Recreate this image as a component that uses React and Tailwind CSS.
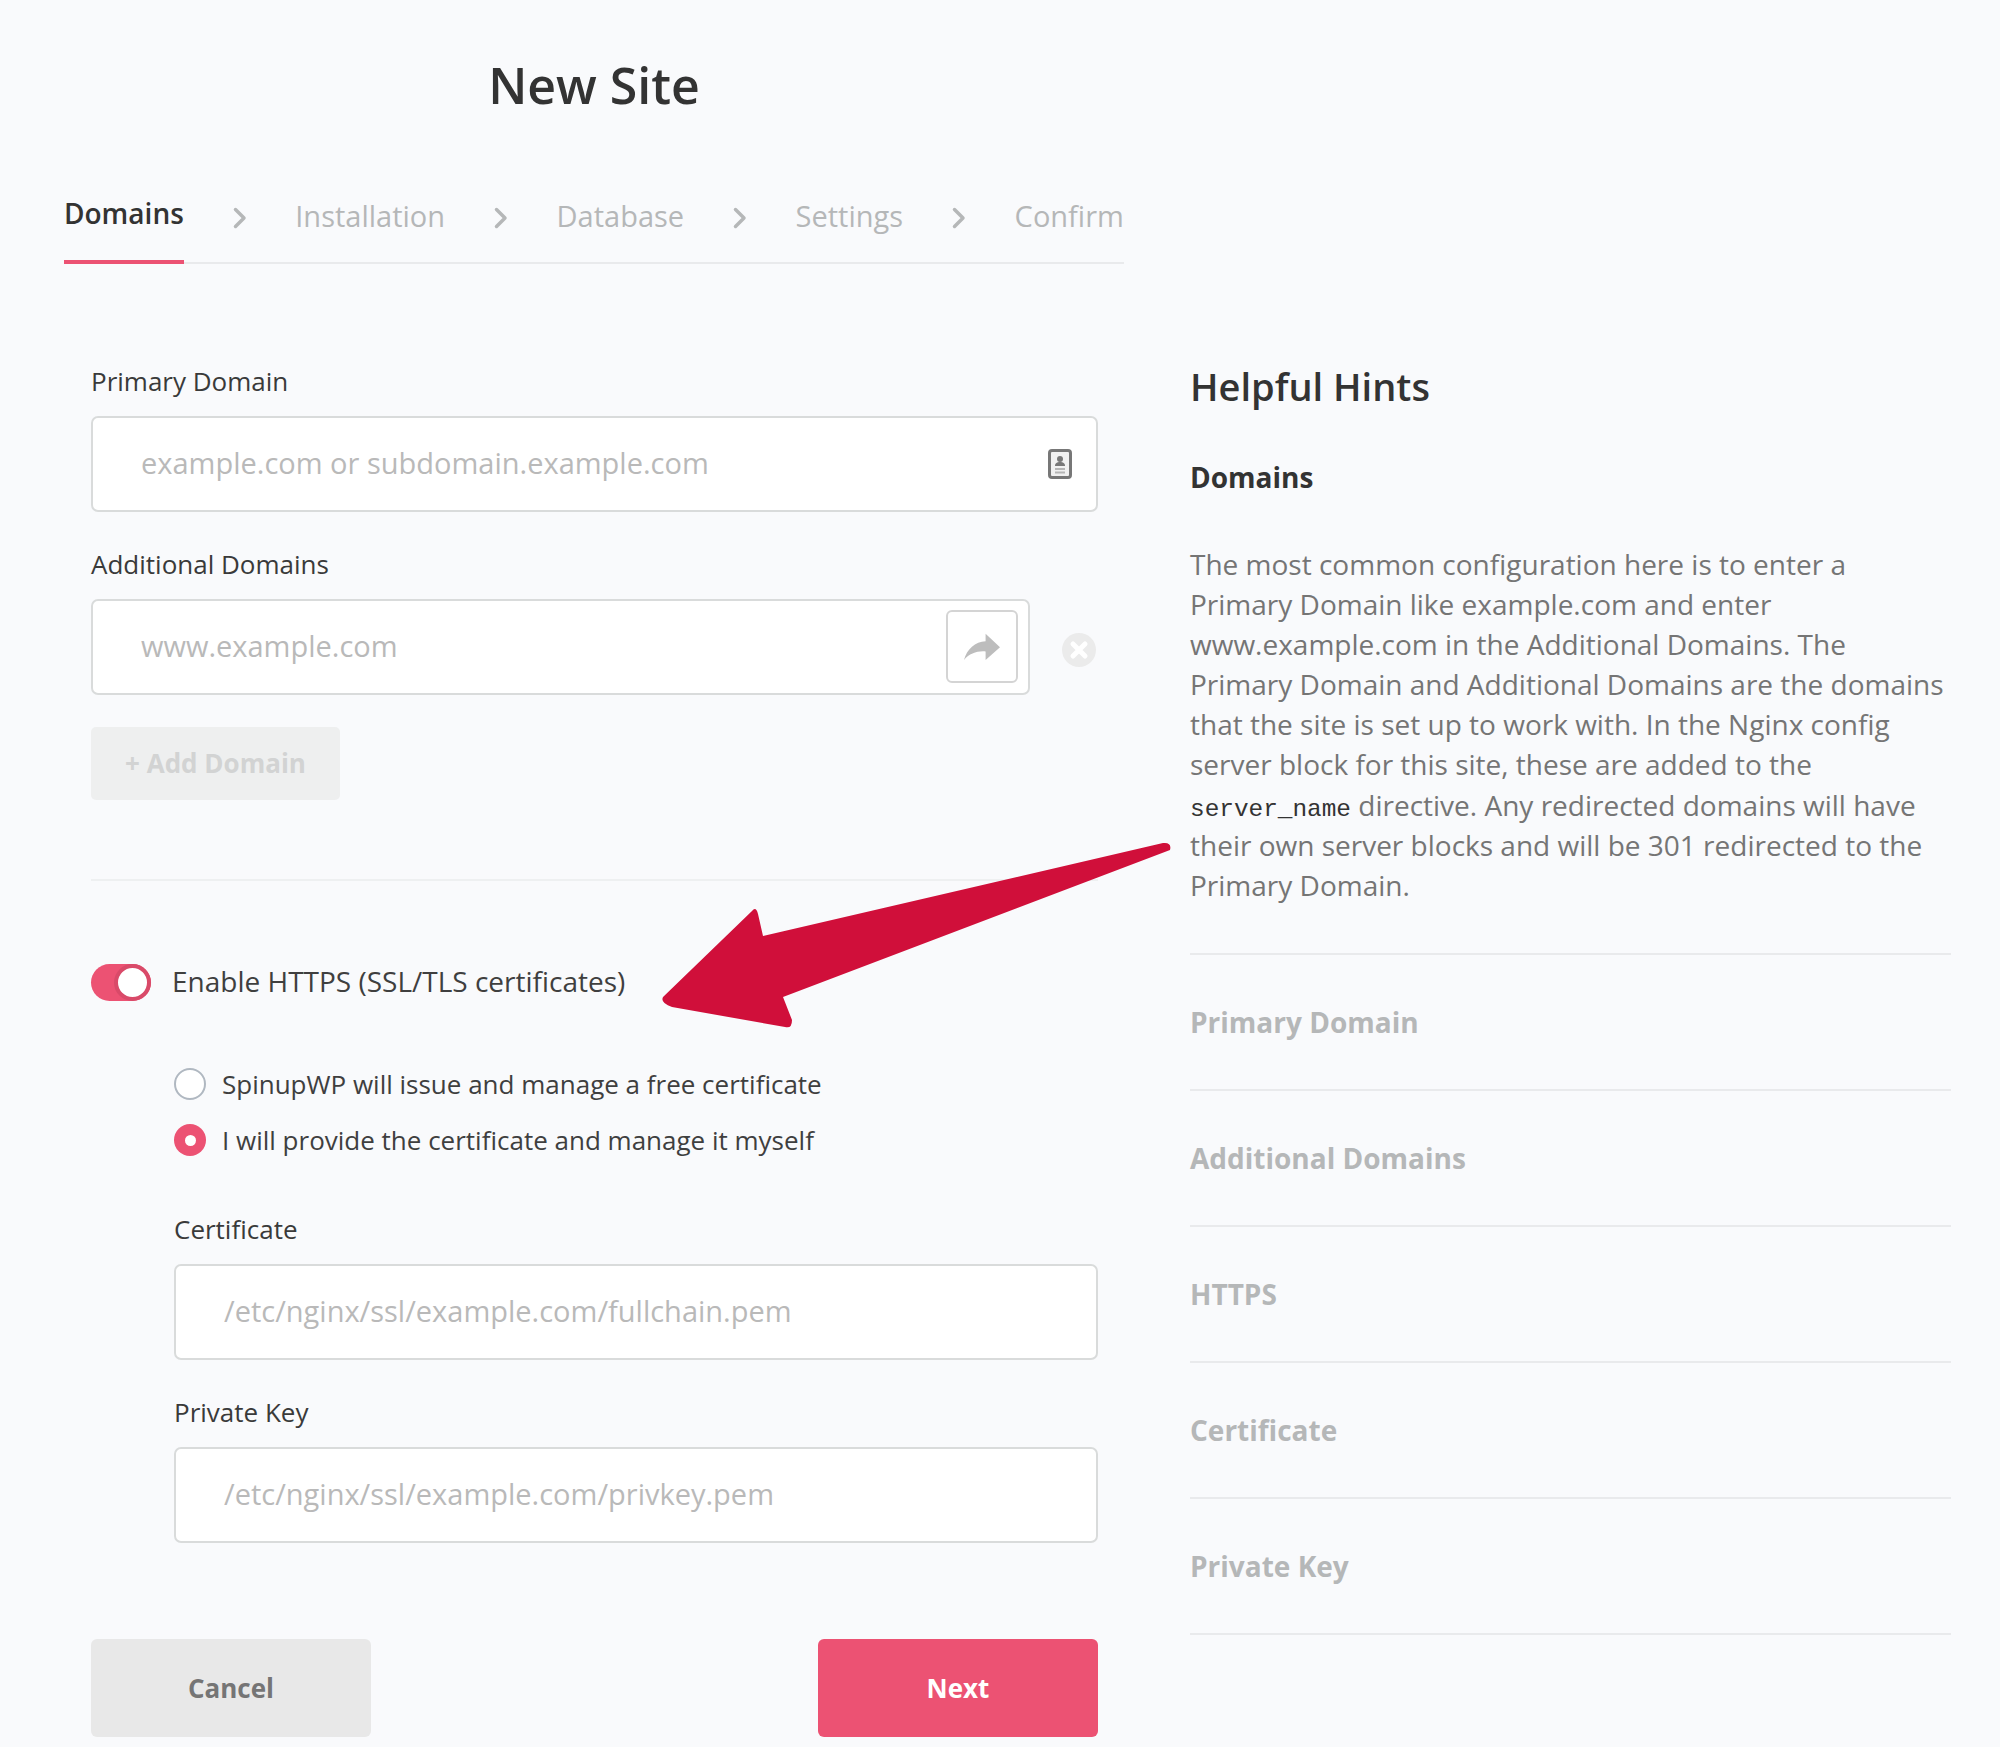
const tabs = ["Installation", "Database", "Settings", "Confirm"];
const hints = ["Primary Domain", "Additional Domains", "HTTPS", "Certificate", "Private Key"];

function Chevron() {
  return (
    <svg width="14" height="22" viewBox="0 0 14 22" fill="none" className="mt-1">
      <path d="M2.5 2.5 11 11l-8.5 8.5" stroke="#b5b7b8" strokeWidth="3.5" strokeLinecap="round" strokeLinejoin="round" />
    </svg>
  );
}

function ContactIcon() {
  return (
    <svg width="24" height="30" viewBox="0 0 24 30" className="absolute right-[26px] top-[33px]">
      <rect x="1.5" y="1.5" width="21" height="27" rx="2.5" fill="#f0f0f0" stroke="#777" strokeWidth="3" />
      <circle cx="12" cy="10" r="3" fill="#777" />
      <path d="M7 17c0-3 2-4 5-4s5 1 5 4z" fill="#777" />
      <path d="M7 20h10M7 23.5h10" stroke="#b5b5b5" strokeWidth="2" />
    </svg>
  );
}

function ShareIcon() {
  return (
    <svg width="36" height="28" viewBox="72 645 105 78">
      <path d="M135 645 177 685 135 722V697C110 695 88 703 72 722 80 690 105 668 135 667Z" fill="#bdbdbd" />
    </svg>
  );
}

function TextField({ placeholder, className = "" }) {
  return (
    <input
      placeholder={placeholder}
      className={`w-full h-[96px] rounded-[7px] border-2 border-[#d9dbdb] bg-white pl-[48px] pr-4 pb-[3px] text-[29px] text-[#333] placeholder:text-[#b9b9b9] outline-none ${className}`}
    />
  );
}

function Field({ label, children }) {
  return (
    <div>
      <label className="block text-[26px] leading-[34px] text-[#3a3a3a] mb-[18px]">{label}</label>
      {children}
    </div>
  );
}

function Radio({ checked, children }) {
  return (
    <label className="flex items-center h-[32px] gap-[16px] text-[26px] text-[#3f3f3f]">
      {checked ? (
        <span className="w-[32px] h-[32px] rounded-full bg-[#ec5273] flex items-center justify-center">
          <span className="w-[11px] h-[11px] rounded-full bg-white" />
        </span>
      ) : (
        <span className="w-[32px] h-[32px] rounded-full bg-white border-2 border-[#b0b8c1]" />
      )}
      {children}
    </label>
  );
}

export default function App() {
  return (
    <div className="relative min-h-[1747px] bg-[#f9fafc] font-['Open_Sans',sans-serif] flex overflow-hidden">
      <div className="w-[1060px] ml-[64px] shrink-0">
        <h1 className="text-center text-[50px] leading-[68px] font-semibold text-[#333] mt-[51px]">New Site</h1>

        <div className="mt-[68px] h-[77px] flex justify-between border-b-2 border-[#e9eaec] text-[29px]">
          <div className="h-[77px] flex items-start border-b-4 border-[#ec5273] text-[28px] font-semibold text-[#333] leading-[38px] pt-[7px]">Domains</div>
          {tabs.map((tab) => [
            <div key={tab + "-c"} className="h-[38px] mt-[10px] flex items-center"><Chevron /></div>,
            <div key={tab} className="text-[#b5b7b8] leading-[38px] mt-[10px]">{tab}</div>,
          ])}
        </div>

        <div className="pl-[27px] pr-[26px] mt-[100px]">
          <Field label="Primary Domain">
            <div className="relative">
              <TextField placeholder="example.com or subdomain.example.com" />
              <ContactIcon />
            </div>
          </Field>

          <div className="mt-[35px]">
            <Field label="Additional Domains">
              <div className="flex items-center">
                <div className="relative w-[939px]">
                  <TextField placeholder="www.example.com" />
                  <button className="absolute right-[12px] top-[11px] w-[72px] h-[73px] rounded-[6px] border-2 border-[#d4d4d4] bg-white flex items-center justify-center">
                    <ShareIcon />
                  </button>
                </div>
                <svg width="34" height="34" viewBox="0 0 34 34" className="ml-[32px] mt-[6px]">
                  <circle cx="17" cy="17" r="17" fill="#ebebeb" />
                  <path d="M11 11l12 12M23 11 11 23" stroke="#fff" strokeWidth="5" strokeLinecap="round" />
                </svg>
              </div>
            </Field>
          </div>

          <button className="mt-[32px] w-[249px] h-[73px] rounded-[5px] bg-[#eeefef] pb-[1px] text-[26px] font-bold text-[#d2d3d3]">+ Add Domain</button>

          <div className="mt-[79px] border-t-2 border-[#eef0f1]" />

          <div className="mt-[79px] flex items-center gap-[21px]">
            <div className="w-[60px] h-[37px] rounded-full bg-[#ec5273] flex justify-end shrink-0">
              <span className="w-[37px] h-[37px] rounded-full bg-white border-[4px] border-[#d94a69]" />
            </div>
            <span className="text-[28px] text-[#3f3f3f] pb-[2px]">Enable HTTPS (SSL/TLS certificates)</span>
          </div>

          <div className="ml-[83px]">
            <div className="mt-[64px] flex flex-col gap-[24px]">
              <Radio>SpinupWP will issue and manage a free certificate</Radio>
              <Radio checked>I will provide the certificate and manage it myself</Radio>
            </div>

            <div className="mt-[56px]">
              <Field label="Certificate">
                <TextField placeholder="/etc/nginx/ssl/example.com/fullchain.pem" />
              </Field>
            </div>
            <div className="mt-[35px]">
              <Field label="Private Key">
                <TextField placeholder="/etc/nginx/ssl/example.com/privkey.pem" />
              </Field>
            </div>
          </div>

          <div className="mt-[96px] flex justify-between">
            <button className="w-[280px] h-[98px] rounded-[6px] bg-[#e8e8e8] text-[26px] font-bold text-[#757575]">Cancel</button>
            <button className="w-[280px] h-[98px] rounded-[6px] bg-[#ec5273] text-[26px] font-bold text-white">Next</button>
          </div>
        </div>
      </div>

      <aside className="w-[761px] ml-[66px] shrink-0 pt-[358px]">
        <h2 className="text-[38px] leading-[56px] font-semibold text-[#333]">Helpful Hints</h2>
        <h3 className="mt-[44px] text-[28px] leading-[38px] font-bold text-[#333]">Domains</h3>
        <p className="mt-[48px] text-[28px] leading-[40.1px] text-[#757575]">
          The most common configuration here is to enter a Primary Domain like example.com and enter www.example.com in the Additional Domains. The Primary Domain and Additional Domains are the domains that the site is set up to work with. In the Nginx config server block for this site, these are added to the{" "}
          <code className="font-['Liberation_Mono',monospace] text-[24.4px] leading-none text-[#333]">server_name</code> directive. Any redirected domains will have their own server blocks and will be 301 redirected to the Primary Domain.
        </p>
        <div className="mt-[48px] border-t-2 border-[#e9eaec]">
          {hints.map((hint) => (
            <div key={hint} className="h-[136px] flex items-center border-b-2 border-[#e9eaec] text-[28px] font-bold text-[#b5b7b8]">{hint}</div>
          ))}
        </div>
      </aside>

      {/* annotation arrow drawn over the page */}
      <svg width="2000" height="1747" className="absolute left-0 top-0 pointer-events-none">
        <path d="M1163 843Q1172 842 1170 850L783 997 792 1020Q792 1029 785 1027L672 1007Q660 1003 663 997L752 911Q756 906 758 914L763 936Z" fill="#d00f3a" />
      </svg>
    </div>
  );
}
